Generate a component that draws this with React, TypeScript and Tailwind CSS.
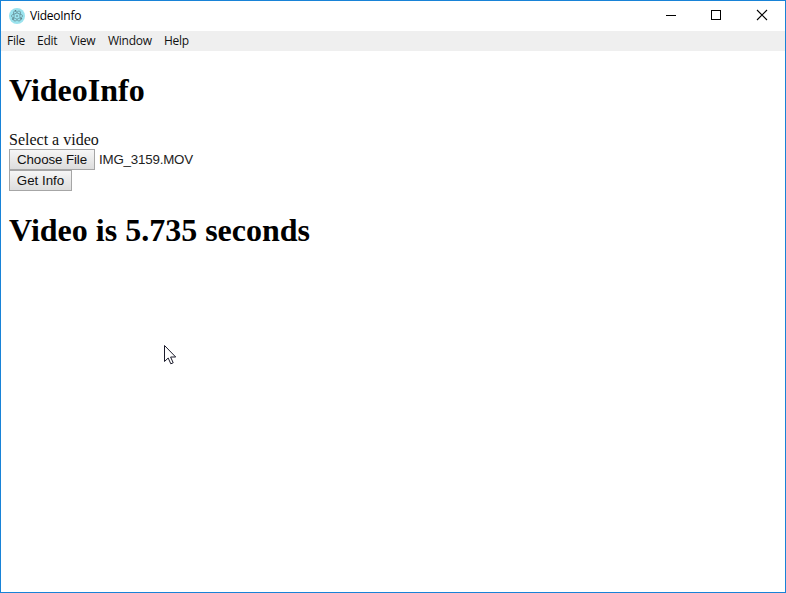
import React from "react";

const menus = [
  { label: "File", width: "w-[30px]" },
  { label: "Edit", width: "w-[33px]" },
  { label: "View", width: "w-[38px]" },
  { label: "Window", width: "w-[56px]" },
  { label: "Help", width: "w-[30px]" },
];

function ElectronIcon() {
  return (
    <svg width="16" height="16" viewBox="0 0 16 16" fill="none">
      <circle cx="8" cy="8" r="8" fill="#9be3ee" />
      <g stroke="#55757c" strokeWidth="0.55">
        <ellipse cx="8" cy="8" rx="5.6" ry="2.4" />
        <ellipse cx="8" cy="8" rx="5.6" ry="2.4" transform="rotate(60 8 8)" />
        <ellipse cx="8" cy="8" rx="5.6" ry="2.4" transform="rotate(120 8 8)" />
      </g>
      <circle cx="8" cy="8" r="2.6" fill="#9be3ee" />
      <g fill="#55757c">
        <circle cx="8" cy="8" r="0.8" />
        <circle cx="3.6" cy="11" r="0.7" />
        <circle cx="12.5" cy="10.8" r="0.7" />
        <circle cx="6.6" cy="2.7" r="0.7" />
      </g>
    </svg>
  );
}

const buttonClass =
  "block h-[21px] border border-[#a6a6a6] bg-linear-to-b from-[#f6f6f6] to-[#dddddd] text-center font-['Liberation_Sans',sans-serif] leading-[18px] text-[#111] whitespace-nowrap";

export default function App() {
  return (
    <div className="relative flex h-[593px] w-[786px] flex-col overflow-hidden border border-[#1883d7] bg-white text-black">
      <header className="flex h-[30px] shrink-0 items-center pl-2 font-['Open_Sans',sans-serif] text-[12px] tracking-[-0.25px]">
        <ElectronIcon />
        <span className="ml-[5px] flex-1 pb-px leading-5">VideoInfo</span>
        <svg width="136" height="30" shapeRendering="crispEdges" stroke="#000" fill="none">
          <path d="M17 14.5h10M62.5 9.5h9v9h-9z" />
          <path d="M108 9l10 10M118 9l-10 10" shapeRendering="auto" strokeWidth="1.1" />
        </svg>
      </header>
      <nav className="flex h-5 shrink-0 bg-[#efefef] pl-1.5 font-['Open_Sans',sans-serif] text-[12px] leading-5 tracking-[-0.25px] text-[#111]">
        {menus.map((m) => (
          <span key={m.label} className={m.width}>
            {m.label}
          </span>
        ))}
      </nav>
      <main className="px-2 pt-[21px] font-['Liberation_Serif',serif] text-[16px] leading-[18px]">
        <h1 className="mb-[22px] h-[37px] text-[32px] leading-[37px] font-bold">VideoInfo</h1>
        <div className="h-[18px] text-[#111]">Select a video</div>
        <div className="flex h-[21px] items-center">
          <button className={`${buttonClass} w-[86px] text-[13.33px] tracking-[-0.1px]`}>Choose File</button>
          <span className="ml-1 font-['Liberation_Sans',sans-serif] text-[13.33px] tracking-[-0.2px] whitespace-nowrap text-[#222]">
            IMG_3159.MOV
          </span>
        </div>
        <button className={`${buttonClass} w-[63px] text-[13.33px]`}>Get Info</button>
        <h1 className="mt-[21px] h-[37px] text-[32px] leading-[37px] font-bold">Video is 5.735 seconds</h1>
      </main>
      <svg className="absolute top-[344px] left-[163px]" width="13" height="20" viewBox="0 0 13 20">
        <path d="M.5.5v16l3.7-3.5 2.6 5.8 2.4-1-2.6-5.8h5.1z" fill="#fff" stroke="#1a1a2a" strokeWidth="1" />
      </svg>
    </div>
  );
}
